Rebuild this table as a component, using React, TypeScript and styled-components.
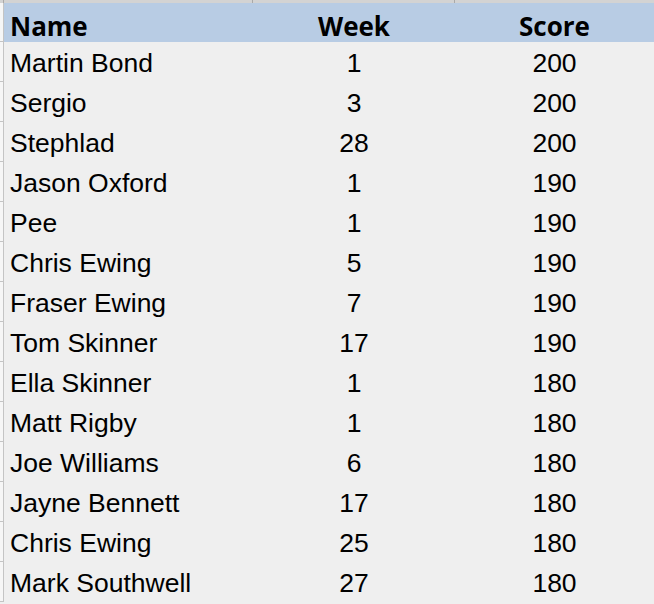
import React from "react";
import styled, { createGlobalStyle } from "styled-components";

const Global = createGlobalStyle`
  html, body { margin: 0; padding: 0; background: #ffffff; }
  body { width: 654px; height: 604px; overflow: hidden; }
`;

const rows: [string, number, number][] = [
  ["Martin Bond", 1, 200],
  ["Sergio", 3, 200],
  ["Stephlad", 28, 200],
  ["Jason Oxford", 1, 190],
  ["Pee", 1, 190],
  ["Chris Ewing", 5, 190],
  ["Fraser Ewing", 7, 190],
  ["Tom Skinner", 17, 190],
  ["Ella Skinner", 1, 180],
  ["Matt Rigby", 1, 180],
  ["Joe Williams", 6, 180],
  ["Jayne Bennett", 17, 180],
  ["Chris Ewing", 25, 180],
  ["Mark Southwell", 27, 180],
];

const Sheet = styled.div`
  width: 654px;
  height: 604px;
  overflow: hidden;
  display: grid;
  grid-template-columns: 4px 249px 202px 199px;
  grid-template-rows: 3px 39px repeat(14, 40px);
  background: #efefef;
`;

const Stub = styled.div<{ $edge?: boolean }>`
  box-sizing: border-box;
  background: #d3d3d3;
  border-right: 1px solid ${(p) => (p.$edge ? "#a9a9a9" : "#d3d3d3")};
`;

const Gutter = styled.div`
  box-sizing: border-box;
  background: #f6f6f6;
  border-right: 1px solid #c4c4c4;
  border-bottom: 1px solid #c4c4c4;
`;

const HeadCell = styled.div<{ $align: "left" | "center" }>`
  box-sizing: border-box;
  background: #b8cce4;
  padding: 8px ${(p) => (p.$align === "left" ? "0 0 6px" : "0 0 0")};
  text-align: ${(p) => p.$align};
  font-family: "Open Sans", "DejaVu Sans", sans-serif;
  font-weight: 700;
  font-size: 26px;
  line-height: 30px;
  color: #000;
  white-space: nowrap;
`;

const Cell = styled.div<{ $align: "left" | "center" }>`
  box-sizing: border-box;
  background: #efefef;
  padding: 6px ${(p) => (p.$align === "left" ? "0 0 6px" : "0 0 0")};
  text-align: ${(p) => p.$align};
  font-family: "Liberation Sans", Arial, sans-serif;
  font-size: 26.5px;
  line-height: 30px;
  color: #000;
  white-space: nowrap;
`;

export default function App() {
  return (
    <>
      <Global />
      <Sheet>
        <Stub $edge />
        <Stub $edge />
        <Stub $edge />
        <Stub />
        <Gutter />
        <HeadCell $align="left">Name</HeadCell>
        <HeadCell $align="center">Week</HeadCell>
        <HeadCell $align="center">Score</HeadCell>
        {rows.map(([name, week, score], i) => (
          <React.Fragment key={i}>
            <Gutter />
            <Cell $align="left">{name}</Cell>
            <Cell $align="center">{week}</Cell>
            <Cell $align="center">{score}</Cell>
          </React.Fragment>
        ))}
      </Sheet>
    </>
  );
}
